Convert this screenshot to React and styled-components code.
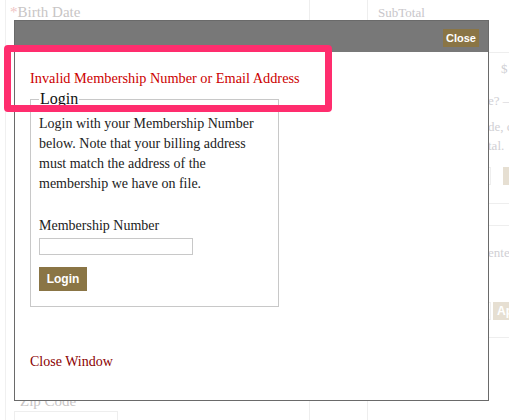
import React from 'react';
import styled, { createGlobalStyle } from 'styled-components';

const GlobalStyle = createGlobalStyle`
  html, body {
    margin: 0;
    padding: 0;
    background: #fff;
  }
  body {
    font-family: "Liberation Serif", Georgia, serif;
  }
`;

const Page = styled.div`
  position: relative;
  width: 509px;
  height: 420px;
  overflow: hidden;
  background: #fff;
`;

/* faded checkout page behind the dialog */
const Backdrop = styled.div`
  display: grid;
  grid-template-columns: 310px 58px 1fr;
  height: 100%;
  font-family: "Liberation Serif", Georgia, serif;
  color: #c9c6c6;
`;

const LeftCol = styled.div`
  margin-left: 5px;
  border-left: 1px solid #f0f0f0;
  border-right: 1px solid #eee;
  padding: 3px 0 0 4px;
  display: flex;
  flex-direction: column;
`;

const MidCol = styled.div`
  border-right: 1px solid #eee;
`;

const RightCol = styled.div`
  display: flex;
  flex-direction: column;
`;

const FadedLabel = styled.div`
  font-size: 15px;
  line-height: 18px;
  color: #c8c5c5;
  margin-left: ${p => p.$indent || 0}px;
  span {
    color: #f0c4c4;
  }
`;

const Spacer = styled.div`
  flex: 1;
`;

const FadedInput = styled.div`
  flex: none;
  width: 102px;
  height: 8px;
  margin: 1px 0 0 4px;
  border: 1px solid #eee;
  border-bottom: none;
`;

const SubTotal = styled.div`
  box-sizing: border-box;
  height: 52px;
  padding: 5px 0 0 10px;
  font-size: 13px;
  color: #c8c6ca;
`;

const RightEdge = styled.div`
  display: flex;
  flex-direction: column;
  padding-left: 120px;
`;

const EdgeBlock = styled.div`
  box-sizing: border-box;
  font-size: 13px;
  line-height: 19px;
  color: #d0cfd4;
  border-top: ${p => (p.$line ? '1px solid #eee' : 'none')};
  height: ${p => p.$h}px;
  padding-top: ${p => p.$pt || 0}px;
  padding-left: ${p => p.$pl || 0}px;
  display: flex;
  flex-direction: column;
  align-items: flex-start;
  white-space: nowrap;
`;

const EdgeText = styled.span`
  margin-top: ${p => p.$mt || 0}px;
`;

const EdgeRow = styled.div`
  display: flex;
  gap: ${p => p.$gap}px;
  align-items: center;
  margin-top: ${p => p.$mt || 0}px;
`;

const EdgeInput = styled.div`
  width: 2px;
  height: 16px;
  border: 1px solid #eee;
  border-left: none;
`;

const EdgeButton = styled.div`
  width: 30px;
  height: 18px;
  background: #e6dfd2;
  color: #fff;
  font: bold 12px "Liberation Sans", Arial, sans-serif;
  line-height: 18px;
  padding-left: 4px;
`;

/* dialog */
const Modal = styled.div`
  position: absolute;
  left: 14px;
  top: 20px;
  width: 473px;
  height: 379px;
  border: 1px solid #6a6a6a;
  background: #fff;
  display: flex;
  flex-direction: column;
`;

const ModalHeader = styled.div`
  flex: none;
  height: 31px;
  background: #787878;
  display: flex;
  justify-content: flex-end;
  align-items: flex-start;
  padding: 8px 9px 0 0;
  box-sizing: border-box;
`;

const HeaderButton = styled.button`
  width: 36px;
  height: 18px;
  border: none;
  padding: 0;
  background: #8a7545;
  color: #fff;
  font: bold 11px "Liberation Sans", Arial, sans-serif;
  cursor: pointer;
`;

const ModalBody = styled.div`
  flex: 1;
  padding: 18px 15px 0 15px;
  display: flex;
  flex-direction: column;
  align-items: flex-start;
`;

const ErrorText = styled.div`
  color: #cc0000;
  font-size: 14.3px;
  line-height: 16px;
`;

const Fieldset = styled.fieldset`
  width: 249px;
  height: 217px;
  box-sizing: border-box;
  margin: 4px 0 0 0;
  padding: 0 8px;
  border: 1px solid #c8c8c8;
`;

const Legend = styled.legend`
  font-size: 16px;
  color: #111;
  padding: 0 1px;
  margin-left: 0;
  line-height: 18px;
`;

const Intro = styled.p`
  margin: 6px 0 0 0;
  font-size: 14px;
  line-height: 20px;
  color: #222;
`;

const FieldLabel = styled.label`
  display: block;
  margin-top: 22px;
  font-size: 14px;
  line-height: 20px;
  color: #222;
`;

const TextInput = styled.input`
  display: block;
  width: 154px;
  height: 17px;
  box-sizing: border-box;
  border: 1px solid #c8c8c8;
  margin: 2px 0 0 0;
  padding: 0 3px;
`;

const SubmitButton = styled.button`
  display: block;
  width: 48px;
  height: 24px;
  margin-top: 12px;
  border: none;
  padding: 0;
  background: #8a7545;
  color: #fff;
  font: bold 12px "Liberation Sans", Arial, sans-serif;
  cursor: pointer;
`;

const CloseLink = styled.a`
  margin-top: 47px;
  color: #8b0000;
  font-size: 14px;
  line-height: 16px;
  text-decoration: none;
  cursor: pointer;
`;

/* annotation drawn over the screenshot */
const Highlight = styled.div`
  position: absolute;
  left: 4px;
  top: 45px;
  width: 328px;
  height: 67px;
  box-sizing: border-box;
  border: 7px solid #ff2d6e;
  border-radius: 4px;
  pointer-events: none;
`;

export default function App() {
  return (
    <Page>
      <GlobalStyle />
      <Backdrop>
        <LeftCol>
          <FadedLabel>
            <span>*</span>Birth Date
          </FadedLabel>
          <Spacer />
          <FadedLabel $indent={10}>Zip Code</FadedLabel>
          <FadedInput />
        </LeftCol>
        <MidCol />
        <RightCol>
          <SubTotal>SubTotal</SubTotal>
          <RightEdge>
            <EdgeBlock $line $h={38} $pt={6} $pl={13}>$</EdgeBlock>
            <EdgeBlock $h={113} $pt={1}>
              <EdgeText>e? —</EdgeText>
              <EdgeText $mt={7}>de, c</EdgeText>
              <EdgeText>tal.</EdgeText>
              <EdgeRow $mt={12} $gap={12}>
                <EdgeInput />
                <EdgeButton />
              </EdgeRow>
            </EdgeBlock>
            <EdgeBlock $line $h={22} />
            <EdgeBlock $line $h={112} $pt={17}>
              <EdgeText>ente</EdgeText>
              <EdgeRow $mt={40} $gap={2}>
                <EdgeInput />
                <EdgeButton>Ap</EdgeButton>
              </EdgeRow>
            </EdgeBlock>
            <EdgeBlock $line $h={24} />
          </RightEdge>
        </RightCol>
      </Backdrop>

      <Modal>
        <ModalHeader>
          <HeaderButton>Close</HeaderButton>
        </ModalHeader>
        <ModalBody>
          <ErrorText>Invalid Membership Number or Email Address</ErrorText>
          <Fieldset>
            <Legend>Login</Legend>
            <Intro>
              Login with your Membership Number
              <br />
              below. Note that your billing address
              <br />
              must match the address of the
              <br />
              membership we have on file.
            </Intro>
            <FieldLabel>Membership Number</FieldLabel>
            <TextInput type="text" />
            <SubmitButton>Login</SubmitButton>
          </Fieldset>
          <CloseLink>Close Window</CloseLink>
        </ModalBody>
      </Modal>

      <Highlight />
    </Page>
  );
}
